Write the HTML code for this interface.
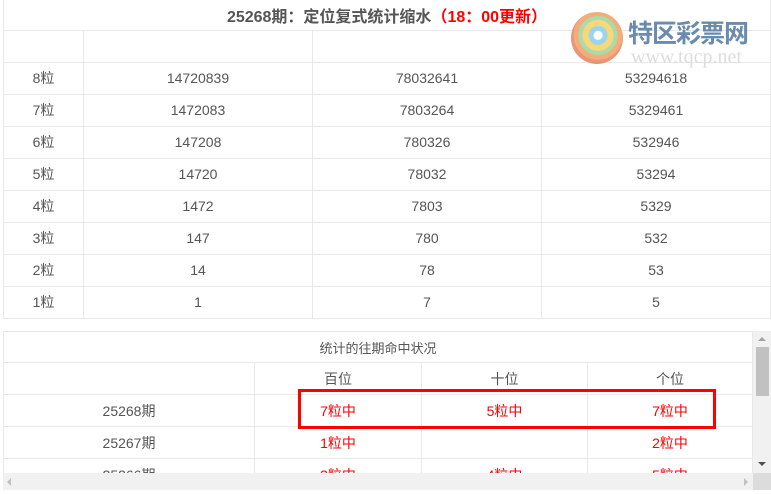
<!DOCTYPE html>
<html><head><meta charset="utf-8"><style>
*{margin:0;padding:0;box-sizing:border-box}
body{width:771px;height:494px;background:#fff;font-family:"Liberation Sans","Noto Sans CJK SC",sans-serif;color:#555;font-size:14px;position:relative;overflow:hidden}
.abs{position:absolute}
table{border-collapse:collapse;position:absolute}
td{border:1px solid #e8e8e8;text-align:center;padding:0}
.red{color:#f00}
</style></head><body>
<table style="left:3px;top:0;width:768px">
<tr style="height:30px"><td colspan="4" style="font-size:16px;font-weight:bold;color:#555;border-top:none">25268期：定位复式统计缩水<span class="red">（18：00更新）</span></td></tr>
<tr style="height:32px"><td style="width:80px"></td><td style="width:229px"></td><td style="width:229px"></td><td></td></tr>
<tr style="height:32px"><td>8粒</td><td>14720839</td><td>78032641</td><td>53294618</td></tr>
<tr style="height:32px"><td>7粒</td><td>1472083</td><td>7803264</td><td>5329461</td></tr>
<tr style="height:32px"><td>6粒</td><td>147208</td><td>780326</td><td>532946</td></tr>
<tr style="height:32px"><td>5粒</td><td>14720</td><td>78032</td><td>53294</td></tr>
<tr style="height:32px"><td>4粒</td><td>1472</td><td>7803</td><td>5329</td></tr>
<tr style="height:32px"><td>3粒</td><td>147</td><td>780</td><td>532</td></tr>
<tr style="height:32px"><td>2粒</td><td>14</td><td>78</td><td>53</td></tr>
<tr style="height:32px"><td>1粒</td><td>1</td><td>7</td><td>5</td></tr>
</table>
<div class="abs" style="left:3px;top:331px;width:750px;height:142px;overflow:hidden">
<table style="left:0;top:0;width:750px">
<tr style="height:31px"><td colspan="4" style="font-size:13px">统计的往期命中状况</td></tr>
<tr style="height:32px"><td style="width:251px"></td><td style="width:167px">百位</td><td style="width:166px">十位</td><td>个位</td></tr>
<tr style="height:32px"><td>25268期</td><td class="red">7粒中</td><td class="red">5粒中</td><td class="red">7粒中</td></tr>
<tr style="height:32px"><td>25267期</td><td class="red">1粒中</td><td></td><td class="red">2粒中</td></tr>
<tr style="height:32px"><td>25266期</td><td class="red">3粒中</td><td class="red">4粒中</td><td class="red">5粒中</td></tr>
</table></div>
<div class="abs" style="left:3px;top:331px;width:768px;height:1px;background:#e8e8e8"></div>
<div class="abs" style="left:753px;top:331px;width:18px;height:142px;background:#f1f1f1"></div>
<div class="abs" style="left:756px;top:347px;width:13px;height:49px;background:#c1c1c1"></div>
<div class="abs" style="left:758px;top:337px;border:4px solid transparent;border-bottom:4px solid #a3a3a3;border-top:none;width:0;height:0"></div>
<div class="abs" style="left:758px;top:462px;border:4px solid transparent;border-top:4px solid #505050;border-bottom:none;width:0;height:0"></div>
<div class="abs" style="left:3px;top:473px;width:750px;height:17px;background:#f1f1f1"></div>
<div class="abs" style="left:753px;top:473px;width:18px;height:17px;background:#dcdcdc"></div>
<div class="abs" style="left:7px;top:478px;border:4px solid transparent;border-right:4px solid #c1c1c1;border-left:none"></div>
<div class="abs" style="left:744px;top:478px;border:4px solid transparent;border-left:4px solid #c1c1c1;border-right:none"></div>
<div class="abs" style="left:298px;top:389px;width:418px;height:40px;border:3px solid #f00"></div>
<div class="abs" style="left:571px;top:12px;width:52px;height:52px;border-radius:50%;background:radial-gradient(circle at 52% 45%,#fff 0 4px,#8fd0ee 5px 9px,#f7d36a 10px 15px,#9fd7a5 16px 19px,#f3a46a 20px 24px,#e48a6a 25px);opacity:.9"></div>
<div class="abs" style="left:628px;top:17px;font-size:25px;font-weight:bold;color:#6a8bae;letter-spacing:-1px;font-family:'Noto Sans CJK SC',sans-serif;line-height:30px">特区彩票网</div>
<div class="abs" style="left:631px;top:47px;font-size:20px;color:#ddd;font-family:'Liberation Serif',serif;line-height:20px">www.tqcp.net</div>
</body></html>
